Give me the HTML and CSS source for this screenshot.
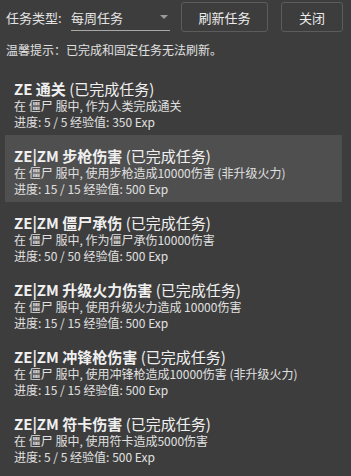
FILE: index.html
```html
<!DOCTYPE html>
<html>
<head>
<meta charset="utf-8">
<link rel="stylesheet" href="styles.css">
</head>
<body>
<div class="panel">
  <div class="toolbar">
    <span class="label">任务类型:</span>
    <div class="select">
      <span class="select-text">每周任务</span>
      <svg class="arrow" width="8" height="5" viewBox="0 0 8 5"><path d="M0 0 L8 0 L4 4 Z" fill="#9a9a9a"/></svg>
    </div>
    <button class="btn btn-refresh">刷新任务</button>
    <button class="btn btn-close">关闭</button>
  </div>
  <div class="hint">温馨提示：已完成和固定任务无法刷新。</div>
  <div class="list">
    <div class="item">
      <div class="title"><b>ZE 通关</b> (已完成任务)</div>
      <div class="line">在 僵尸 服中, 作为人类完成通关</div>
      <div class="line">进度: 5 / 5 经验值: 350 Exp</div>
    </div>
    <div class="item active">
      <div class="title"><b>ZE|ZM 步枪伤害</b> (已完成任务)</div>
      <div class="line">在 僵尸 服中, 使用步枪造成10000伤害 (非升级火力)</div>
      <div class="line">进度: 15 / 15 经验值: 500 Exp</div>
    </div>
    <div class="item">
      <div class="title"><b>ZE|ZM 僵尸承伤</b> (已完成任务)</div>
      <div class="line">在 僵尸 服中, 作为僵尸承伤10000伤害</div>
      <div class="line">进度: 50 / 50 经验值: 500 Exp</div>
    </div>
    <div class="item">
      <div class="title"><b>ZE|ZM 升级火力伤害</b> (已完成任务)</div>
      <div class="line">在 僵尸 服中, 使用升级火力造成 10000伤害</div>
      <div class="line">进度: 15 / 15 经验值: 500 Exp</div>
    </div>
    <div class="item">
      <div class="title"><b>ZE|ZM 冲锋枪伤害</b> (已完成任务)</div>
      <div class="line">在 僵尸 服中, 使用冲锋枪造成10000伤害 (非升级火力)</div>
      <div class="line">进度: 15 / 15 经验值: 500 Exp</div>
    </div>
    <div class="item">
      <div class="title"><b>ZE|ZM 符卡伤害</b> (已完成任务)</div>
      <div class="line">在 僵尸 服中, 使用符卡造成5000伤害</div>
      <div class="line">进度: 5 / 5 经验值: 500 Exp</div>
    </div>
  </div>
</div>
</body>
</html>
```
FILE: styles.css
```css
html, body {
  margin: 0;
  padding: 0;
  background: #3d3d3d;
}
body {
  font-family: "Noto Sans CJK SC", "Noto Sans", sans-serif;
  color: #e8e8e8;
  width: 351px;
  height: 476px;
  overflow: hidden;
}
.panel {
  display: flex;
  flex-direction: column;
}
.toolbar {
  display: flex;
  align-items: center;
  height: 30px;
  padding: 2px 0 0 6px;
}
.label {
  font-size: 13px;
  color: #e4e4e4;
  width: 65px;
}
.select {
  width: 99px;
  height: 26px;
  border-bottom: 1px solid #a8a8a8;
  display: flex;
  align-items: center;
  justify-content: space-between;
  box-sizing: border-box;
  margin-top: 2px;
}
.select-text {
  font-size: 13px;
  color: #e4e4e4;
}
.arrow {
  margin-right: 2px;
}
.btn {
  height: 30px;
  box-sizing: border-box;
  background: #3d3d3d;
  border: 1px solid #5c5c5c;
  border-radius: 3px;
  color: #ececec;
  font-family: inherit;
  font-size: 13px;
  padding: 0;
}
.btn-refresh {
  width: 87px;
  margin-left: 11px;
}
.btn-close {
  width: 62px;
  margin-left: 13px;
}
.hint {
  font-size: 12px;
  color: #e0e0e0;
  padding: 8px 0 0 6px;
  height: 22px;
  line-height: 20px;
}
.list {
  display: flex;
  flex-direction: column;
  padding: 6px 9px 0 5px;
}
.item {
  height: 67px;
  box-sizing: border-box;
  padding: 12px 0 0 9px;
}
.item.active {
  background: #4f4f4f;
}
.title {
  font-size: 15px;
  line-height: 18px;
  color: #f0f0f0;
}
.title b {
  font-weight: 700;
}
.line {
  font-size: 12px;
  line-height: 16px;
  color: #e0e0e0;
}
```
